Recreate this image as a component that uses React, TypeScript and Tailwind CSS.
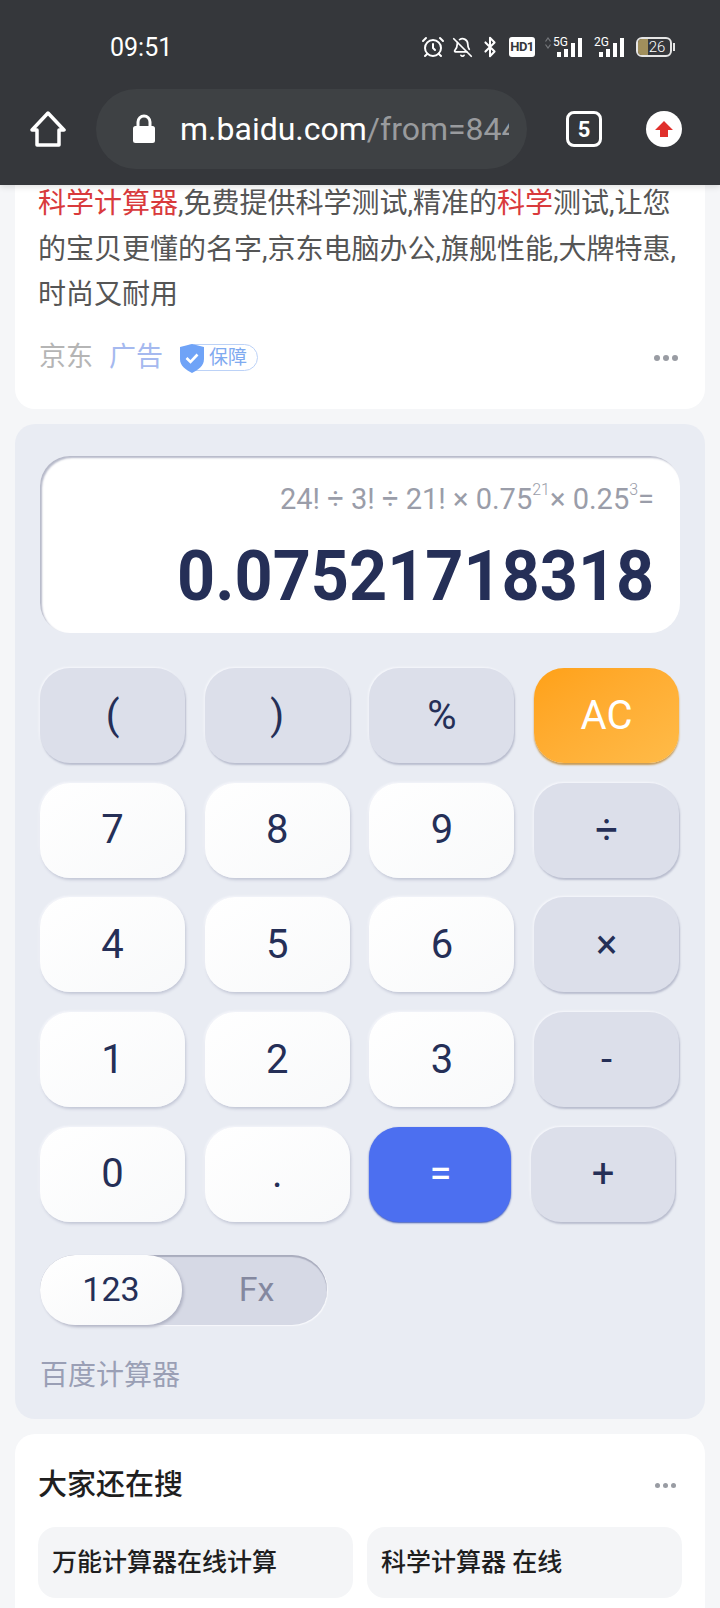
import React from 'react';
import { AlarmClock, BellOff, Bluetooth } from 'lucide-react';

const cjk = "font-['Roboto','Noto_Sans_CJK_SC',sans-serif]";

const variants = {
  grey: "bg-[#dcdfea] text-[#252f57] shadow-[1px_2px_2px_#b9bdce,-1px_-1px_2px_#f6f7fb]",
  white: "bg-gradient-to-br from-[#ffffff] to-[#f8f9fa] text-[#252f57] shadow-[1px_2px_3px_#c3c7d6,-1px_-1px_2px_#f6f7fb]",
  orange: "bg-gradient-to-br from-[#ffa116] to-[#ffbb48] text-white shadow-[0_2px_2px_#c69a55]",
  blue: "bg-[#4c6ff0] text-white shadow-[0_1px_2px_#3a55b5]",
};

const Key = ({ label, variant, className = "w-[145px]" }: { label: string; variant: keyof typeof variants; className?: string }) => (
  <div className={`h-[95px] rounded-[30px] flex items-center justify-center text-[40px] ${variants[variant]} ${className}`}>
    {label}
  </div>
);

const Signal = ({ label, w }: { label: string; w: string }) => (
  <div className={`relative h-[20px] ${w}`}>
    <span className="absolute left-0 -top-[2px] text-[12px] leading-[14px] text-white">{label}</span>
    <div className="absolute bottom-0 right-0 flex items-end gap-[3px]">
      <div className="w-[4px] h-[5px] bg-white" />
      <div className="w-[4px] h-[8px] bg-white" />
      <div className="w-[4px] h-[14px] bg-white" />
      <div className="w-[4px] h-[19px] bg-white" />
    </div>
  </div>
);

const Dots = ({ small }: { small?: boolean }) => (
  <div className="flex gap-[3px]">
    <div className={`rounded-full bg-[#999ca3] ${small ? "w-[5px] h-[5px]" : "w-[6px] h-[6px]"}`} />
    <div className={`rounded-full bg-[#999ca3] ${small ? "w-[5px] h-[5px]" : "w-[6px] h-[6px]"}`} />
    <div className={`rounded-full bg-[#999ca3] ${small ? "w-[5px] h-[5px]" : "w-[6px] h-[6px]"}`} />
  </div>
);

export default function App() {
  return (
    <div className={`w-[720px] h-[1608px] overflow-hidden bg-[#f5f6f8] ${cjk}`}>
      {/* Browser chrome */}
      <div className="h-[185px] bg-[#35373b] relative z-10 shadow-[0_2px_6px_rgba(0,0,0,0.12)]">
        <div className="h-[89px] pt-[5px] pl-[110px] pr-[45px] flex items-center justify-between">
          <span className="text-[25px] text-white mt-[2px]">09:51</span>
          <div className="flex items-center">
            <AlarmClock size={24} color="#fff" strokeWidth={2} />
            <BellOff size={21} color="#fff" strokeWidth={2} className="ml-[7px]" />
            <Bluetooth size={22} color="#fff" strokeWidth={2.2} className="ml-[6px]" />
            <div className="ml-[8px] w-[26px] h-[20px] rounded-[3px] bg-white text-[#35373b] text-[13px] font-bold flex items-center justify-center tracking-[-0.5px]">HD1</div>
            <svg width="6" height="12" viewBox="0 0 6 12" className="ml-[10px] -mt-[8px] -mr-[8px]">
              <path d="M0.5 4.5 L3 1 L5.5 4.5 M0.5 7.5 L3 11 L5.5 7.5" fill="none" stroke="#75777b" strokeWidth="1.2" />
            </svg>
            <Signal label="5G" w="w-[29px] ml-[10px]" />
            <Signal label="2G" w="w-[30px] ml-[12px]" />
            <div className="ml-[12px] w-[36px] h-[20px] rounded-[6px] border-2 border-[#e5e5e5] relative overflow-hidden flex items-center justify-center text-[15px] text-white font-light">
              <div className="absolute left-0 top-0 bottom-0 w-[10px] bg-[#a08f5c]" />
              <span className="relative pl-[6px]">26</span>
            </div>
            <div className="w-[2px] h-[8px] ml-[1px] bg-[#e5e5e5]" />
          </div>
        </div>
        <div className="h-[80px] flex items-center">
          <svg width="36" height="36" viewBox="0 0 36 36" className="ml-[30px]" fill="none">
            <path d="M18 2 L34 19 H29 V34 H7 V19 H2 Z" stroke="#fff" strokeWidth="3.5" strokeLinejoin="round" />
          </svg>
          <div className="ml-[30px] w-[431px] h-[80px] rounded-full bg-[#3e4144] flex items-center pl-[37px] pr-[18px]">
            <svg width="22" height="30" viewBox="0 0 22 30" className="shrink-0">
              <path d="M5 13 V8 a6 6 0 0 1 12 0 V13" fill="none" stroke="#fff" strokeWidth="3" />
              <rect x="0" y="12" width="22" height="17" rx="2.5" fill="#fff" />
            </svg>
            <div className="ml-[25px] overflow-hidden whitespace-nowrap text-[32px] text-white">
              m.baidu.com<span className="text-[#999b9e]">/from=844</span>
            </div>
          </div>
          <div className="ml-[39px] w-[36px] h-[36px] rounded-[8px] border-[3px] border-white text-white text-[22px] font-bold flex items-center justify-center">5</div>
          <div className="ml-[44px] w-[36px] h-[36px] rounded-full bg-white flex items-center justify-center">
            <svg width="20" height="20" viewBox="0 0 20 20">
              <path d="M10 2 L19 11 H14 V18 H6 V11 H1 Z" fill="#e0302c" />
            </svg>
          </div>
        </div>
      </div>

      {/* Ad result card */}
      <div className="mx-[15px] bg-white rounded-b-[20px] h-[228px] pl-[24px] pr-[20px]">
        <div className="text-[28px] leading-[45.5px] text-[#555555] whitespace-nowrap -ml-[1px] -mt-[4px]">
          <div><span className="text-[#d93a3c]">科学计算器</span>,免费提供科学测试,精准的<span className="text-[#d93a3c]">科学</span>测试,让您</div>
          <div>的宝贝更懂的名字,京东电脑办公,旗舰性能,大牌特惠,</div>
          <div>时尚又耐用</div>
        </div>
        <div className="flex items-center mt-[20px] h-[40px] text-[27px]">
          <span className="text-[#b5b5b5]">京东</span>
          <span className="ml-[16px] text-[#a5b9ef]">广告</span>
          <div className="ml-[17px] flex items-center h-[27px] w-[78px] rounded-full border border-[#bcd2f7] relative">
            <svg width="24" height="29" viewBox="0 0 24 29" className="absolute -left-px -top-px">
              <path d="M12 0 L24 3 V15 C24 22 18 26 12 29 C6 26 0 22 0 15 V3 Z" fill="#6fa3f7" />
              <path d="M6.5 14 L10.5 18 L17.5 10.5" fill="none" stroke="#fff" strokeWidth="2.6" />
            </svg>
            <span className="ml-[28px] text-[19px] leading-[25px] text-[#7faaf0]">保障</span>
          </div>
          <div className="ml-auto mr-[7px]"><Dots /></div>
        </div>
      </div>

      {/* Calculator */}
      <div className="mt-[15px] mx-[15px] h-[995px] rounded-[20px] bg-[#e9ecf3] px-[25px] pt-[32px]">
        <div className="h-[177px] rounded-[30px] bg-white shadow-[inset_2px_2px_2px_#b6b9c9] flex flex-col items-end pr-[26px]">
          <div className="mt-[23px] h-[40px] text-[29px] leading-[40px] text-[#9a9da9] whitespace-nowrap">
            24! ÷ 3! ÷ 21! × 0.75<sup className="text-[16px] font-light -top-[14px]">21</sup>× 0.25<sup className="text-[16px] font-light -top-[14px]">3</sup>=
          </div>
          <div className="mt-[17px] text-[70px] leading-[80px] font-bold text-[#252f57] scale-x-[0.95] origin-right">0.07521718318</div>
        </div>

        <div className="mt-[35px] flex flex-col gap-[19.7px]">
          <div className="flex gap-[19.7px]">
            <Key label="(" variant="grey" />
            <Key label=")" variant="grey" />
            <Key label="%" variant="grey" />
            <Key label="AC" variant="orange" />
          </div>
          <div className="flex gap-[19.7px]">
            <Key label="7" variant="white" />
            <Key label="8" variant="white" />
            <Key label="9" variant="white" />
            <Key label="÷" variant="grey" />
          </div>
          <div className="flex gap-[19.7px]">
            <Key label="4" variant="white" />
            <Key label="5" variant="white" />
            <Key label="6" variant="white" />
            <Key label="×" variant="grey" />
          </div>
          <div className="flex gap-[19.7px]">
            <Key label="1" variant="white" />
            <Key label="2" variant="white" />
            <Key label="3" variant="white" />
            <Key label="-" variant="grey" />
          </div>
          <div className="flex gap-[19.7px]">
            <Key label="0" variant="white" />
            <Key label="." variant="white" />
            <Key label="=" variant="blue" className="w-[142px]" />
            <Key label="+" variant="grey" className="w-[144px]" />
          </div>
        </div>

        <div className="mt-[33px] w-[287px] h-[70px] rounded-full bg-[#d6d9e5] shadow-[inset_0_2px_1px_#a9acbd,1px_1px_1px_#f8f9fc] flex items-center text-[34px]">
          <div className="w-[142px] h-[70px] rounded-full bg-gradient-to-br from-[#ffffff] to-[#f7f8f9] shadow-[2px_2px_3px_#b0b3c4] text-[#252f57] flex items-center justify-center">123</div>
          <div className="flex-1 text-center text-[#84889f] pl-[4px]">Fx</div>
        </div>
        <div className="mt-[33px] text-[28px] leading-[36px] text-[#9a9fb5]">百度计算器</div>
      </div>

      {/* Related searches */}
      <div className="mt-[15px] mx-[15px] h-[300px] rounded-t-[20px] bg-white pl-[23px] pr-[23px]">
        <div className="h-[93px] pt-[10px] flex items-center justify-between text-[29px] font-medium text-[#1f1f1f]">
          <span>大家还在搜</span>
          <div className="mr-[6px]"><Dots small /></div>
        </div>
        <div className="flex gap-[14px]">
          <div className="w-[315px] h-[71px] rounded-[18px] bg-[#f4f5f7] pl-[14px] flex items-center text-[25px] font-medium text-[#1f1f1f]">万能计算器在线计算</div>
          <div className="w-[315px] h-[71px] rounded-[18px] bg-[#f4f5f7] pl-[14px] flex items-center text-[25px] font-medium text-[#1f1f1f]">科学计算器 在线</div>
        </div>
      </div>
    </div>
  );
}
